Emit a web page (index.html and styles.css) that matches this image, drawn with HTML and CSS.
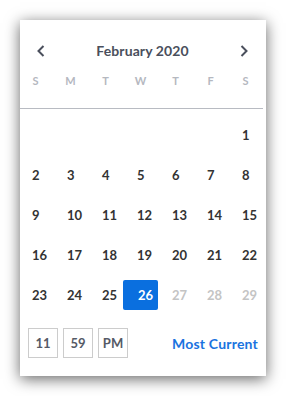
FILE: index.html
```html
<!DOCTYPE html>
<html lang="en">
<head>
	<meta charset="UTF-8">
	<title>Date picker</title>
	<link rel="stylesheet" href="styles.css">
</head>
<body>
	<div class="picker">
		<div class="head">
			<a class="nav" href="javascript:;">
				<svg width="8" height="12" viewBox="0 0 8 12"><path d="M6.5 1L1.5 6l5 5" fill="none" stroke="#4a4f5c" stroke-width="2"/></svg>
			</a>
			<h2>February 2020</h2>
			<a class="nav" href="javascript:;">
				<svg width="8" height="12" viewBox="0 0 8 12"><path d="M1.5 1l5 5-5 5" fill="none" stroke="#4a4f5c" stroke-width="2"/></svg>
			</a>
		</div>
		<ul class="week">
			<li>S</li><li>M</li><li>T</li><li>W</li><li>T</li><li>F</li><li>S</li>
		</ul>
		<div class="line"></div>
		<ul class="days">
			<li></li><li></li><li></li><li></li><li></li><li></li><li>1</li>
			<li>2</li><li>3</li><li>4</li><li>5</li><li>6</li><li>7</li><li>8</li>
			<li>9</li><li>10</li><li>11</li><li>12</li><li>13</li><li>14</li><li>15</li>
			<li>16</li><li>17</li><li>18</li><li>19</li><li>20</li><li>21</li><li>22</li>
			<li>23</li><li>24</li><li>25</li><li class="active">26</li><li class="off">27</li><li class="off">28</li><li class="off">29</li>
		</ul>
		<div class="foot">
			<div class="time">
				<span>11</span>
				<span>59</span>
				<span>PM</span>
			</div>
			<a class="current" href="javascript:;">Most Current</a>
		</div>
	</div>
</body>
</html>
```

FILE: styles.css
```css
body,
h2,
ul {
	margin: 0;
	padding: 0;
}

body {
	background: #fff;
	font-family: Lato, "Liberation Sans", sans-serif;
	font-weight: bold;
}

li {
	list-style: none;
}

a {
	text-decoration: none;
}

.picker {
	width: 246px;
	margin: 20px;
	background: #fff;
	box-shadow: 0 3px 14px rgba(0, 0, 0, 0.6);
}

.head {
	display: flex;
	justify-content: space-between;
	align-items: center;
	height: 20px;
	padding: 21px 18px 0 17px;
}

.nav {
	display: flex;
	width: 8px;
	height: 12px;
}

.head h2 {
	font-size: 14px;
	font-weight: bold;
	color: #4a4f5c;
	line-height: 20px;
	letter-spacing: 0.1px;
}

.week {
	display: grid;
	grid-template-columns: repeat(7, 35px);
	margin: 13px 0 0 -2px;
	height: 14px;
	line-height: 14px;
	font-size: 11px;
	color: #b5b8bf;
	text-align: center;
}

.line {
	width: 243px;
	height: 1px;
	background: #b8bbc2;
	margin-top: 20px;
}

.days {
	display: grid;
	grid-template-columns: repeat(7, 35px);
	row-gap: 10px;
	margin: 11px 0 0 -2px;
	font-size: 13px;
	color: #333;
}

.days li {
	height: 30px;
	line-height: 30px;
	padding-left: 14px;
	box-sizing: border-box;
}

.days .active {
	background: #0a6fdf;
	color: #fff;
	border-radius: 2px;
	padding-left: 15px;
}

.days .off {
	color: #c4c4c4;
}

.foot {
	display: flex;
	justify-content: space-between;
	align-items: center;
	padding: 18px 8px 18px 8px;
}

.time {
	display: flex;
	gap: 5px;
}

.time span {
	width: 30px;
	height: 30px;
	box-sizing: border-box;
	border: 1px solid #ccc;
	line-height: 28px;
	text-align: center;
	font-size: 13px;
	color: #555a66;
}

.current {
	font-size: 14px;
	letter-spacing: 0.2px;
	color: #1a73e0;
}
```
